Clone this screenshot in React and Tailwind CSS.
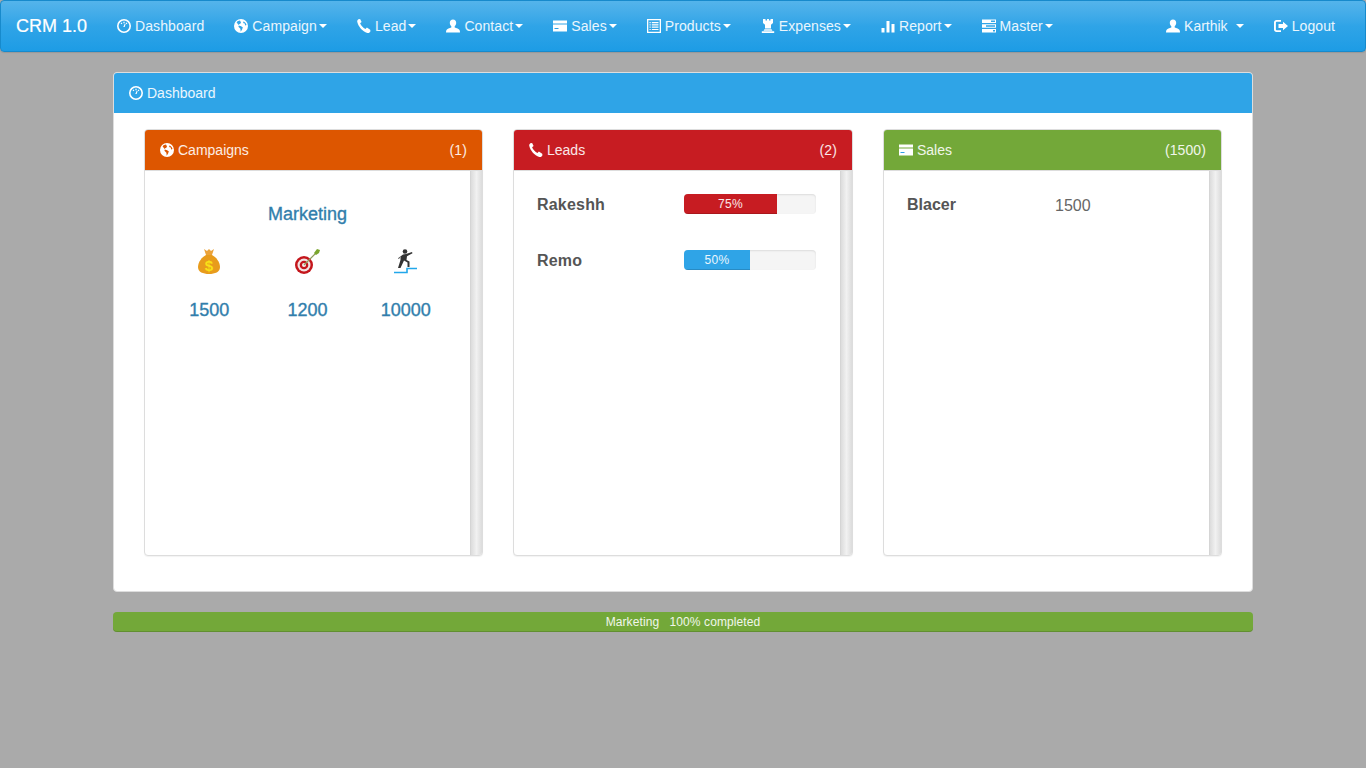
const font = { fontFamily: '"Liberation Sans", Arial, sans-serif' };

function Glyph({ children, className = 'h-[14px] w-[14px]' }) {
  return (
    <svg viewBox="0 0 14 14" className={`inline-block shrink-0 fill-current ${className}`}>
      {children}
    </svg>
  );
}

const DashboardIcon = () => (
  <Glyph>
    <path
      fillRule="evenodd"
      d="M7 0a7 7 0 1 1 0 14A7 7 0 0 1 7 0Zm0 1.600a5.400 5.400 0 1 0 0 10.800A5.400 5.400 0 0 0 7 1.600Z"
    />
    <path d="M6.400 2.800h1.200v1.400H6.400ZM3.600 4.300l.9-.8.9 1-.9.8ZM9.500 3.500l.9.8-.9 1-.9-.8ZM7.700 4.800l.9.3-.9 2.900H6.300Z" />
  </Glyph>
);

const GlobeIcon = () => (
  <Glyph>
    <path
      fillRule="evenodd"
      d="M7 0a7 7 0 1 1 0 14A7 7 0 0 1 7 0ZM2.600 3.400 5 6.200l-.6 1.500 2 2 .3 3 1.500-2.400.6-2-2.200-1.400-1.200.2L5 5.200l1.300-.4.7-1.300L6 1.600C4.600 1.700 3.400 2.400 2.600 3.400ZM9 3l.6 1.300 1.200.2.300 2 1.400-.4c-.3-1.600-1.300-2.900-2.700-3.600Z"
    />
  </Glyph>
);

const PhoneIcon = () => (
  <Glyph>
    <path d="M1.300.300 3.100 0l1.500 3-1.500 1.200c.9 2.200 3 4.600 5.400 5.800l1.400-1.400 3.300 2.200.3 1.500-1.200 1.500c-.5.400-1.100.500-1.700.300C5.600 12.500 1.400 7.800.3 3c-.2-.7-.1-1.200.2-1.700Z" />
  </Glyph>
);

const UserIcon = () => (
  <Glyph>
    <path d="M7 .5c2 0 3.200 1.400 3.200 3.300 0 1.300-.6 2.700-1.500 3.500v1.200c1.700.7 4.300 1.400 4.800 2.500.3.600.5 1.500.5 2.500H0c0-1 .2-1.900.5-2.500.5-1.100 3.100-1.800 4.800-2.500V7.300C4.400 6.500 3.800 5.100 3.800 3.800 3.800 1.900 5 .5 7 .5Z" />
  </Glyph>
);

const CardIcon = () => (
  <Glyph>
    <path d="M0 1.500h14v3H0ZM0 5.500h14v7H0Z" fillRule="evenodd" />
    <path d="M1.500 9h4v1h-4Z" className="fill-[#2fa0e5]" />
  </Glyph>
);

const ListIcon = () => (
  <Glyph>
    <path
      fillRule="evenodd"
      d="M0 0h14v14H0ZM1.300 1.300v11.400h11.400V1.300ZM2.500 3h1.200v1.200H2.500ZM4.800 3h6.700v1.200H4.800ZM2.500 5.300h1.200v1.200H2.500ZM4.800 5.300h6.700v1.200H4.800ZM2.500 7.600h1.200v1.200H2.500ZM4.800 7.600h6.700v1.200H4.800ZM2.500 9.900h1.200v1.200H2.500ZM4.800 9.900h6.700v1.200H4.800Z"
    />
  </Glyph>
);

const TowerIcon = () => (
  <Glyph>
    <path d="M2 0h2.500v1.500h1.500V0h2v1.500h1.500V0H12v4l-2 1.700v3.800H4V5.700L2 4ZM3.500 10.200h7l1 1.500h-9ZM.8 12.300h12.400V14H.8Z" />
  </Glyph>
);

const StatsIcon = () => (
  <Glyph>
    <path d="M.5 9h3v4.500h-3ZM5.500 2h3v11.500h-3ZM10.500 5h3v8.500h-3Z" />
  </Glyph>
);

const TasksIcon = () => (
  <Glyph>
    <path
      fillRule="evenodd"
      d="M0 .5h14v3.500H0ZM0 5.200h14v3.500H0ZM0 9.900h14v3.500H0ZM9 1.500v1.500h4V1.500ZM4 6.200v1.500h9V6.200ZM11 10.900v1.500h2v-1.500Z"
    />
  </Glyph>
);

const LogoutIcon = () => (
  <Glyph>
    <path d="M2.500 1h4.500v1.800H3c-.6 0-1.100.4-1.100 1v6.400c0 .6.500 1 1.100 1h4V13H2.500C1.100 13 0 11.900 0 10.500v-7C0 2.100 1.100 1 2.500 1Z" />
    <path d="M9 2.800 14 7l-5 4.200V8.900H4.500V5.100H9Z" />
  </Glyph>
);

function Caret() {
  return (
    <span className="ml-[2px] inline-block h-0 w-0 border-x-4 border-t-4 border-x-transparent border-t-white" />
  );
}

const menu = [
  { label: 'Dashboard', icon: <DashboardIcon /> },
  { label: 'Campaign', icon: <GlobeIcon />, caret: true },
  { label: 'Lead', icon: <PhoneIcon />, caret: true },
  { label: 'Contact', icon: <UserIcon />, caret: true },
  { label: 'Sales', icon: <CardIcon />, caret: true },
  { label: 'Products', icon: <ListIcon />, caret: true },
  { label: 'Expenses', icon: <TowerIcon />, caret: true },
  { label: 'Report', icon: <StatsIcon />, caret: true },
  { label: 'Master', icon: <TasksIcon />, caret: true },
];

function NavLink({ item }) {
  return (
    <a className="flex items-center px-[15px] text-[14px] tracking-[0.09px] text-white/90">
      <span className="mr-[4px] flex text-white">{item.icon}</span>
      {item.label}
      {item.caret && <Caret />}
    </a>
  );
}

function Navbar() {
  return (
    <nav className="flex h-[52px] rounded-[4px] border border-[#178acc] bg-gradient-to-b from-[#54b4eb] via-[#2fa4e7] to-[#1d9ce5] pr-[15px] shadow-[0_1px_1px_rgba(0,0,0,0.1)]">
      <a className="flex items-center px-[15px] text-[18px] text-white [-webkit-text-stroke:0.2px_white]">CRM 1.0</a>
      <div className="flex">
        {menu.map(item => (
          <NavLink item={item} key={item.label} />
        ))}
      </div>
      <div className="ml-auto flex">
        <a className="flex items-center px-[15px] text-[14px] text-white/90">
          <span className="mr-[4px] flex text-white">
            <UserIcon />
          </span>
          Karthik
          <span className="ml-[6px] flex">
            <Caret />
          </span>
        </a>
        <NavLink item={{ label: 'Logout', icon: <LogoutIcon /> }} />
      </div>
    </nav>
  );
}

function MoneyBag() {
  return (
    <svg viewBox="0 0 30 30" className="mx-auto h-[30px] w-[30px]">
      <path d="M10 1l3 2 2-2 2 2 3-2-2 6h-6Z" fill="#eba33a" />
      <path
        d="M12 7h6c4 2 8 7 8 12 0 5-5 7-11 7S4 24 4 19c0-5 4-10 8-12Z"
        fill="#e89c1c"
      />
      <text
        x="15"
        y="23"
        textAnchor="middle"
        fontSize="15"
        fontWeight="700"
        fill="#f9e117"
        fontFamily="Liberation Sans"
      >
        $
      </text>
    </svg>
  );
}

function Target() {
  return (
    <svg viewBox="0 0 30 30" className="mx-auto h-[30px] w-[30px]">
      <circle cx="12" cy="17" r="9" fill="#c4161c" />
      <circle cx="12" cy="17" r="6.500" fill="#f3e3e3" />
      <circle cx="12" cy="17" r="4.300" fill="#c4161c" />
      <circle cx="12" cy="17" r="2" fill="#f5eeee" />
      <path d="M12 17 24 5" stroke="#8d9a5a" strokeWidth="1.200" />
      <path d="M22 5l3-4 3 1-1 3-3 2Z" fill="#7aa62e" />
    </svg>
  );
}

function Runner() {
  return (
    <svg viewBox="0 0 30 30" className="mx-auto h-[30px] w-[30px]">
      <circle cx="14" cy="3.500" r="2.300" fill="#333" />
      <path
        d="M12 6.500l3-.5 6-2 .5 1.200-5.500 3-.5 3.800 3 1.500V19h-2v-4.500l-3.500-2L9.500 20H7l2.500-8V8.500L8 11l-1-.8Z"
        fill="#333"
      />
      <path d="M3 24.500h13v-4h10" fill="none" stroke="#22a7ea" strokeWidth="1.600" />
    </svg>
  );
}

const stats = [
  { value: '1500', image: <MoneyBag /> },
  { value: '1200', image: <Target /> },
  { value: '10000', image: <Runner /> },
];

function Card({ title, icon, count, color, width, children }) {
  return (
    <div className={`flex h-[427px] flex-col overflow-hidden rounded-[4px] border border-[#ddd] bg-white shadow-[0_1px_1px_rgba(0,0,0,0.05)] ${width}`}>
      <div className={`flex h-[41px] shrink-0 items-center justify-between border-b border-[#ddd] px-[15px] text-[14px] text-white/90 ${color}`}>
        <span className="flex items-center">
          <span className="mr-[4px] flex text-white">{icon}</span>
          {title}
        </span>
        <span className="tracking-[0.1px]">{count}</span>
      </div>
      <div className="flex min-h-0 flex-1">
        <div className="min-w-0 flex-1">{children}</div>
        <div className="w-[12px] shrink-0 border-l border-[#d5d5d5] bg-gradient-to-r from-[#dcdcdc] via-[#f1f1f1] to-[#dcdcdc]" />
      </div>
    </div>
  );
}

function Bar({ name, label, width, color }) {
  return (
    <div className="flex h-[20px] items-center pl-[23px]">
      <span className="w-[147px] pt-[2px] text-[16px] font-bold tracking-[0.2px] text-[#555]">{name}</span>
      <div className="flex h-[20px] w-[132px] overflow-hidden rounded-[4px] bg-[#f5f5f5] shadow-[inset_0_1px_2px_rgba(0,0,0,0.1)]">
        <div className={`text-center text-[12px] leading-[20px] tracking-[0.3px] text-white/90 shadow-[inset_0_-1px_0_rgba(0,0,0,0.15)] ${width} ${color}`}>
          {label}
        </div>
      </div>
    </div>
  );
}

export default function App() {
  return (
    <div className="min-h-[768px] bg-[#aaaaaa]" style={font}>
      <Navbar />
      <div className="mx-auto w-[1140px] pt-[20px]">
        <div className="overflow-hidden rounded-[4px] border border-[#ddd] bg-white">
          <div className="flex h-[40px] items-center bg-[#2fa4e7] px-[15px] text-[14px] text-white/90">
            <span className="mr-[4px] flex text-white">
              <DashboardIcon />
            </span>
            Dashboard
          </div>
          <div className="flex gap-[30px] px-[30px] pb-[35px] pt-[16px]">
            <Card title="Campaigns" icon={<GlobeIcon />} count="(1)" color="bg-[#dd5600]" width="w-[339px]">
              <div className="px-[15px] pt-[33px] text-[18px] text-[#317eac] [-webkit-text-stroke:0.35px_#317eac]">
                <div className="text-center leading-[20px]">Marketing</div>
                <div className="mt-[24px] grid grid-cols-3">
                  {stats.map(stat => (
                    <div className="text-center" key={stat.value}>
                      {stat.image}
                      <div className="mt-[22px] leading-[20px]">{stat.value}</div>
                    </div>
                  ))}
                </div>
              </div>
            </Card>
            <Card title="Leads" icon={<PhoneIcon />} count="(2)" color="bg-[#c71c22]" width="w-[340px]">
              <div className="flex flex-col gap-[36px] pt-[23px]">
                <Bar name="Rakeshh" label="75%" width="w-[93px]" color="bg-[#c71c22]" />
                <Bar name="Remo" label="50%" width="w-[66px]" color="bg-[#2fa4e7]" />
              </div>
            </Card>
            <Card title="Sales" icon={<CardIcon />} count="(1500)" color="bg-[#73a839]" width="w-[339px]">
              <div className="mt-[23px] flex h-[20px] items-center pl-[23px] text-[16px]">
                <span className="w-[148px] pt-[1px] font-bold text-[#555]">Blacer</span>
                <span className="pt-[3px] text-[#666]">1500</span>
              </div>
            </Card>
          </div>
        </div>
        <div className="mt-[20px] h-[20px] rounded-[4px] bg-[#73a839] text-center text-[12px] leading-[20px] tracking-[0.1px] text-white/90 shadow-[inset_0_-1px_0_rgba(0,0,0,0.15)]">
          Marketing&nbsp;&nbsp;&nbsp;100% completed
        </div>
      </div>
    </div>
  );
}
